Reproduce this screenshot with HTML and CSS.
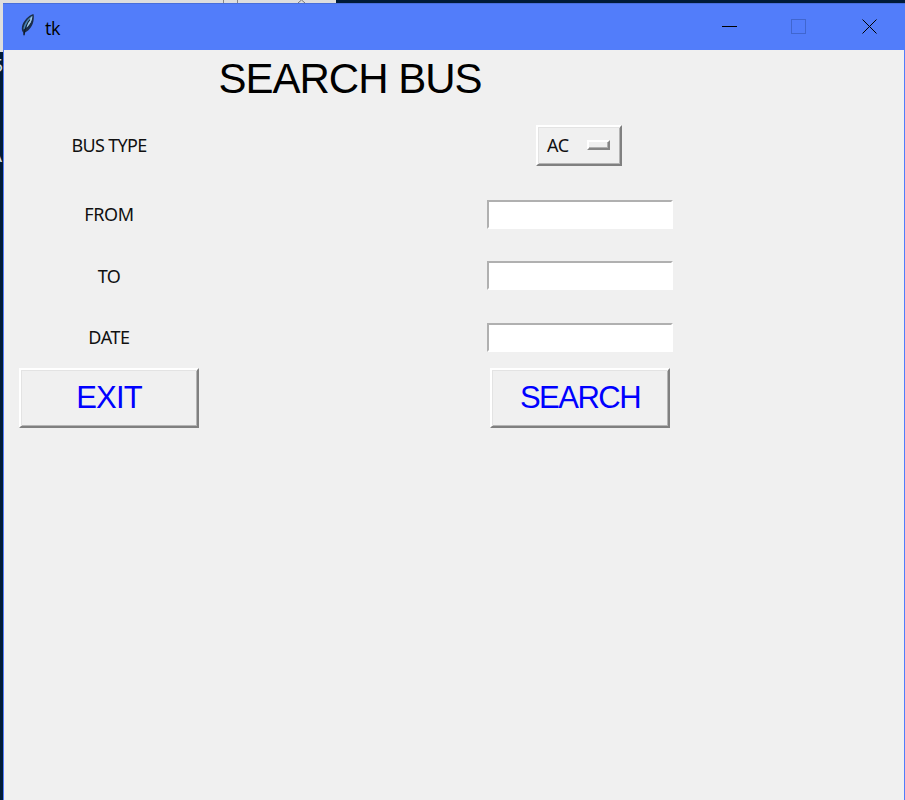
FILE: index.html
```
<!DOCTYPE html>
<html lang="en">
<head>
<meta charset="utf-8">
<title>tk</title>
<link rel="stylesheet" href="styles.css">
</head>
<body>
<div class="behind-top"><span class="tab-line"></span><span class="tab-line second"></span><svg class="tab-caret" width="9" height="3" viewBox="0 0 9 3"><path d="M1 3 4.500 0 8 3" fill="none" stroke="#777"/></svg></div>
<div class="behind-left"><span class="glyph five">5</span><span class="glyph lambda">A</span></div>
<main class="window">
  <header class="titlebar">
    <svg class="feather" width="16" height="26" viewBox="0 0 16 26">
      <path d="M13.400 1C8.500 2.300 3 8.500 2 13.500c-.5 2.800 0 4.500 1 5.700l1 4.300 1.100-4C9.500 17.500 13 12.500 13.600 7c.3-2.600.4-4.500-.2-6z" fill="#1b2c48"/>
      <path d="M12.300 2.800C8 5 3.600 11 3.300 16.500 7.500 15 12.300 9 12.300 2.800z" fill="#4782b4"/>
      <path d="M12.400 3C9.800 5.500 8.400 8 7.400 10.500l-.6 4C10 11.500 12.300 7.500 12.400 3z" fill="#a3c9e2"/>
      <path d="M10 6.500C7.500 9.500 5 14.500 4 22" fill="none" stroke="#101a28" stroke-width="1.100"/>
    </svg>
    <span class="caption">tk</span>
    <svg class="controls" width="156" height="17" viewBox="0 0 156 17" shape-rendering="crispEdges" fill="none">
      <path d="M0 8.500h15" stroke="#000"/>
      <path d="M69.500 1.500h14v14h-14z" stroke="#4066cf"/>
      <path d="M140.500 1.500l14 14m0-14l-14 14" stroke="#000" shape-rendering="auto"/>
    </svg>
  </header>
  <form class="form">
    <h1 class="title">SEARCH BUS</h1>
    <span class="label bus-type">BUS TYPE</span>
    <button type="button" class="raised option">AC<span class="indicator"></span></button>
    <label class="label from" for="from">FROM</label>
    <input class="entry" id="from">
    <label class="label to" for="to">TO</label>
    <input class="entry" id="to">
    <label class="label date" for="date">DATE</label>
    <input class="entry" id="date">
    <button type="button" class="raised action"><span class="exit">EXIT</span></button>
    <button type="button" class="raised action search"><span>SEARCH</span></button>
  </form>
</main>
</body>
</html>
```
FILE: styles.css
```
* { box-sizing: border-box; }
body {
  margin: 0;
  height: 800px;
  padding: 3px 0 0 3px;
  overflow: hidden;
  position: relative;
  background: #001b38;
}
.behind-top {
  position: absolute;
  left: 0;
  top: 0;
  width: 336px;
  height: 3px;
  background: #dedede;
}
.tab-line {
  position: absolute;
  left: 223px;
  width: 1px;
  height: 3px;
  background: #888;
}
.tab-line.second { left: 237px; }
.tab-caret { position: absolute; left: 297px; top: 0; }
.behind-left {
  position: absolute;
  left: 0;
  top: 0;
  width: 3px;
  height: 180px;
  overflow: hidden;
  background: linear-gradient(#dedede 52px, #001b38 52px);
}
.glyph {
  position: absolute;
  right: 0;
  color: #d8e0e8;
  font: 18px/20px "Noto Sans", sans-serif;
}
.five { top: 55px; }
.lambda { top: 145px; right: 1px; }
.window {
  position: relative;
  height: 797px;
  background: #f0f0f0;
  border-left: 1px solid #527dfa;
  border-right: 1px solid #527dfa;
}
.titlebar {
  display: flex;
  align-items: center;
  height: 47px;
  margin: 0 -1px;
  padding: 0 27px 2px 17px;
  background: #527dfa;
  border-top: 1px solid #486edb;
}
.feather { flex: none; }
.caption {
  margin: 3px 0 0 9px;
  font: 18px/24px "Open Sans", sans-serif;
  letter-spacing: -0.5px;
  color: #000;
}
.controls { margin-left: auto; }
.form {
  display: grid;
  grid-template-columns: 210px 272px 188px;
  grid-template-rows: 58px 75px 62px 61px 62px 60px;
  align-items: center;
  justify-items: center;
}
.title {
  grid-column: 2;
  margin: 0;
  font: 42px/46px "Liberation Sans", sans-serif;
  letter-spacing: -1px;
  white-space: nowrap;
  color: #000;
}
.label {
  grid-column: 1;
  font: 18px/24px "Noto Sans", sans-serif;
  letter-spacing: -0.7px;
  color: #111;
}
.bus-type { padding-bottom: 2px; }
.from, .date { letter-spacing: -0.4px; }
.entry {
  grid-column: 3;
  width: 186px;
  height: 29px;
  padding: 0 4px;
  border: 2px solid;
  border-color: #b0b0b0 #fff #fff #b0b0b0;
  background: #fff;
  outline: none;
}
.raised {
  border: 2px solid;
  border-color: #fff #808080 #808080 #fff;
  background: #f0f0f0;
  box-shadow: inset 1px 1px #e3e3e3, inset -1px -1px #b5b5b5;
}
.option {
  grid-column: 3;
  display: flex;
  align-items: center;
  justify-content: space-between;
  width: 86px;
  height: 41px;
  margin: 0 2px 1px 0;
  padding: 0 10px 0 9px;
  font: 18px/24px "Noto Sans", sans-serif;
  letter-spacing: -0.3px;
  color: #111;
}
.indicator {
  width: 23px;
  height: 10px;
  border: 2px solid;
  border-color: #fff #858585 #858585 #fff;
  box-shadow: inset -1px -1px #b0b0b0;
}
.action {
  grid-column: 1;
  width: 180px;
  height: 60px;
  padding: 0;
  font: 31px/36px "Liberation Sans", sans-serif;
  color: #00f;
}
.action.search { grid-column: 3; letter-spacing: -1.5px; }
.exit { letter-spacing: -0.8px; }
```
